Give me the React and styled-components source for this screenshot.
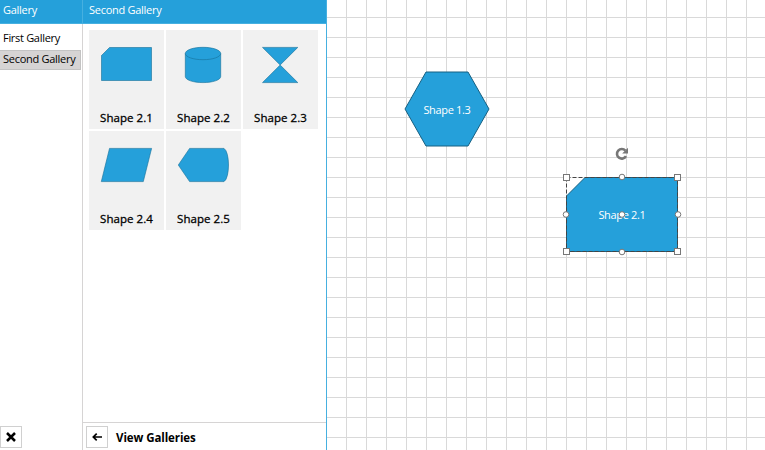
import React from "react";
import styled, { createGlobalStyle } from "styled-components";

const Global = createGlobalStyle`
  body { margin: 0; background: #fff; overflow: hidden; }
  * { box-sizing: border-box; }
`;

const Shell = styled.main`
  display: flex;
  width: 765px;
  height: 450px;
  font-family: "Open Sans", "Noto Sans", sans-serif;
  font-size: 11px;
  color: #000;
`;

const Panel = styled.section`
  display: flex;
  flex-direction: column;
  flex: none;
  width: ${(p) => p.$width}px;
  border-right: 1px solid ${(p) => p.$edge};
`;

const Header = styled.header`
  flex: none;
  height: 24px;
  margin-right: -1px;
  padding-left: ${(p) => p.$inset}px;
  line-height: 20px;
  color: #fff;
  background: #25a0da;
  border-bottom: 1px solid #46b0e0;
  border-right: 1px solid #46b0e0;
`;

const Label = styled.span`
  display: inline-block;
  white-space: nowrap;
  letter-spacing: ${(p) => p.$track || 0}px;
`;

const Names = styled.nav`
  flex: 1;
  padding-top: 5px;
`;

const NameItem = styled.div`
  width: 81px;
  height: 20px;
  margin-bottom: 1px;
  padding-left: 3px;
  line-height: 16px;
  background: ${(p) => (p.$selected ? "#d6d4d4" : "transparent")};
  border: 1px solid ${(p) => (p.$selected ? "#c3c3c3" : "transparent")};
  border-left: 0;
`;

const Cards = styled.div`
  flex: 1;
  display: grid;
  grid-template-columns: repeat(3, 75px);
  grid-auto-rows: 99px;
  gap: 2px;
  align-content: start;
  padding: 6px;
`;

const Card = styled.article`
  display: flex;
  flex-direction: column;
  align-items: center;
  background: #f1f1f1;
`;

const Thumb = styled.svg`
  display: block;
  width: 75px;
  height: 79px;
  fill: #25a0da;
  stroke: #167099;
  stroke-width: 0.6;
`;

const CardTitle = styled(Label)`
  line-height: 18px;
  font-size: 11.5px;
  font-weight: 500;
  -webkit-text-stroke: 0.3px #000;
`;

const CornerBar = styled.footer`
  height: 24px;
`;

const BackBar = styled.footer`
  display: flex;
  align-items: center;
  gap: 8px;
  height: 28px;
  padding: 1px 3px 0;
  border-top: 1px solid #d6d4d4;
  font-size: 11.5px;
  font-weight: 700;
`;

const IconButton = styled.button`
  display: grid;
  place-items: center;
  width: 22px;
  height: 22px;
  padding: 0;
  background: #fff;
  border: 1px solid #d0d0d0;
`;

const Canvas = styled.section`
  position: relative;
  flex: 1;
  background-image: linear-gradient(90deg, #d9d9d9 1px, transparent 1px),
    linear-gradient(#d9d9d9 1px, transparent 1px);
  background-size: 20px 20px;
  background-position: 19px 17px;
`;

const Node = styled.div`
  position: absolute;
  left: ${(p) => p.$x}px;
  top: ${(p) => p.$y}px;
  width: ${(p) => p.$w}px;
  height: ${(p) => p.$h}px;
  display: grid;
  place-items: center;
  color: #fff;

  > * { grid-area: 1 / 1; }
  > svg { display: block; overflow: visible; }
`;

const Adorner = styled.svg`
  position: relative;
`;

const shapes = [
  { name: "Shape 2.1", art: <path d="M20.5 17.5H62.5V50.5H12.5V25.5Z" /> },
  {
    name: "Shape 2.2",
    art: (
      <>
        <path d="M19.3 23.5C19.3 20 27.3 17.3 37 17.3S54.7 20 54.7 23.5V46.5C54.7 50 46.7 52.6 37 52.6S19.3 50 19.3 46.5Z" />
        <path d="M19.3 23.5C19.3 27 27.3 29.7 37 29.7S54.7 27 54.7 23.5" fill="none" />
      </>
    ),
  },
  { name: "Shape 2.3", art: <path d="M19.5 17.4H54.8L19.5 52.6H54.8Z" /> },
  { name: "Shape 2.4", art: <path d="M20.5 17.4H62.6L54.3 50.6H12.3Z" /> },
  { name: "Shape 2.5", art: <path d="M23.6 17.4H58C64 21 64 47 58 50.6H23.6L12.3 34Z" /> },
];

const corners = [[0, 0], [111, 0], [0, 74], [111, 74]];
const sides = [[56, 0], [0, 37.5], [112, 37.5], [56, 75], [56, 37.5]];

export default function App() {
  return (
    <>
      <Global />
      <Shell>
        <Panel $width={83} $edge="#d6d4d4">
          <Header $inset={3}><Label $track={-0.27}>Gallery</Label></Header>
          <Names>
            <NameItem><Label $track={-0.3}>First Gallery</Label></NameItem>
            <NameItem $selected><Label $track={-0.27}>Second Gallery</Label></NameItem>
          </Names>
          <CornerBar>
            <IconButton aria-label="Close">
              <svg width="10" height="10" viewBox="0 0 10 10" stroke="#000" strokeWidth="2.5">
                <path d="M1 1 9 9M9 1 1 9" />
              </svg>
            </IconButton>
          </CornerBar>
        </Panel>

        <Panel $width={244} $edge="#46b0e0">
          <Header $inset={6}><Label $track={-0.27}>Second Gallery</Label></Header>
          <Cards>
            {shapes.map((s) => (
              <Card key={s.name}>
                <Thumb viewBox="0 0 75 79">{s.art}</Thumb>
                <CardTitle $track={0.05}>{s.name}</CardTitle>
              </Card>
            ))}
          </Cards>
          <BackBar>
            <IconButton aria-label="Back">
              <svg width="10" height="8" viewBox="0 0 10 8" fill="none" stroke="#000" strokeWidth="1.7">
                <path d="M10 4H1.5M4.7 .6 1.3 4 4.7 7.4" />
              </svg>
            </IconButton>
            <Label $track={-0.09}>View Galleries</Label>
          </BackBar>
        </Panel>

        <Canvas>
          <Node $x={78} $y={72} $w={84} $h={74}>
            <svg width="84" height="74" fill="#25a0da" stroke="#166082">
              <path d="M21 0H63L84 37 63 74H21L0 37Z" />
            </svg>
            <Label $track={-0.33}>Shape 1.3</Label>
          </Node>
          <Node $x={239} $y={177} $w={112} $h={75}>
            <svg width="112" height="75">
              <path d="M.5 .5H19L.5 19Z" fill="#fff" />
              <path d="M19 .5H111.5V74.5H.5V19Z" fill="#25a0da" stroke="#166082" />
            </svg>
            <Label $track={-0.33}>Shape 2.1</Label>
            <Adorner width="112" height="75" fill="#fff" stroke="#777">
              <path d="M.5 .5H111.5V74.5H.5Z" fill="none" stroke="#444" strokeDasharray="4 2" />
              {corners.map(([x, y]) => (
                <rect key={`${x}-${y}`} x={x - 2.5} y={y - 2.5} width="6" height="6" />
              ))}
              {sides.map(([x, y]) => (
                <circle key={`${x}-${y}`} cx={x} cy={y} r="2.8" />
              ))}
              <g stroke="none" fill="#777">
                <path d="M60 -20.9A4.8 4.8 0 1 1 59.4 -26.4" fill="none" stroke="#777" strokeWidth="2.6" />
                <path d="M62 -29.2V-23.4H56.2Z" />
              </g>
            </Adorner>
          </Node>
        </Canvas>
      </Shell>
    </>
  );
}
